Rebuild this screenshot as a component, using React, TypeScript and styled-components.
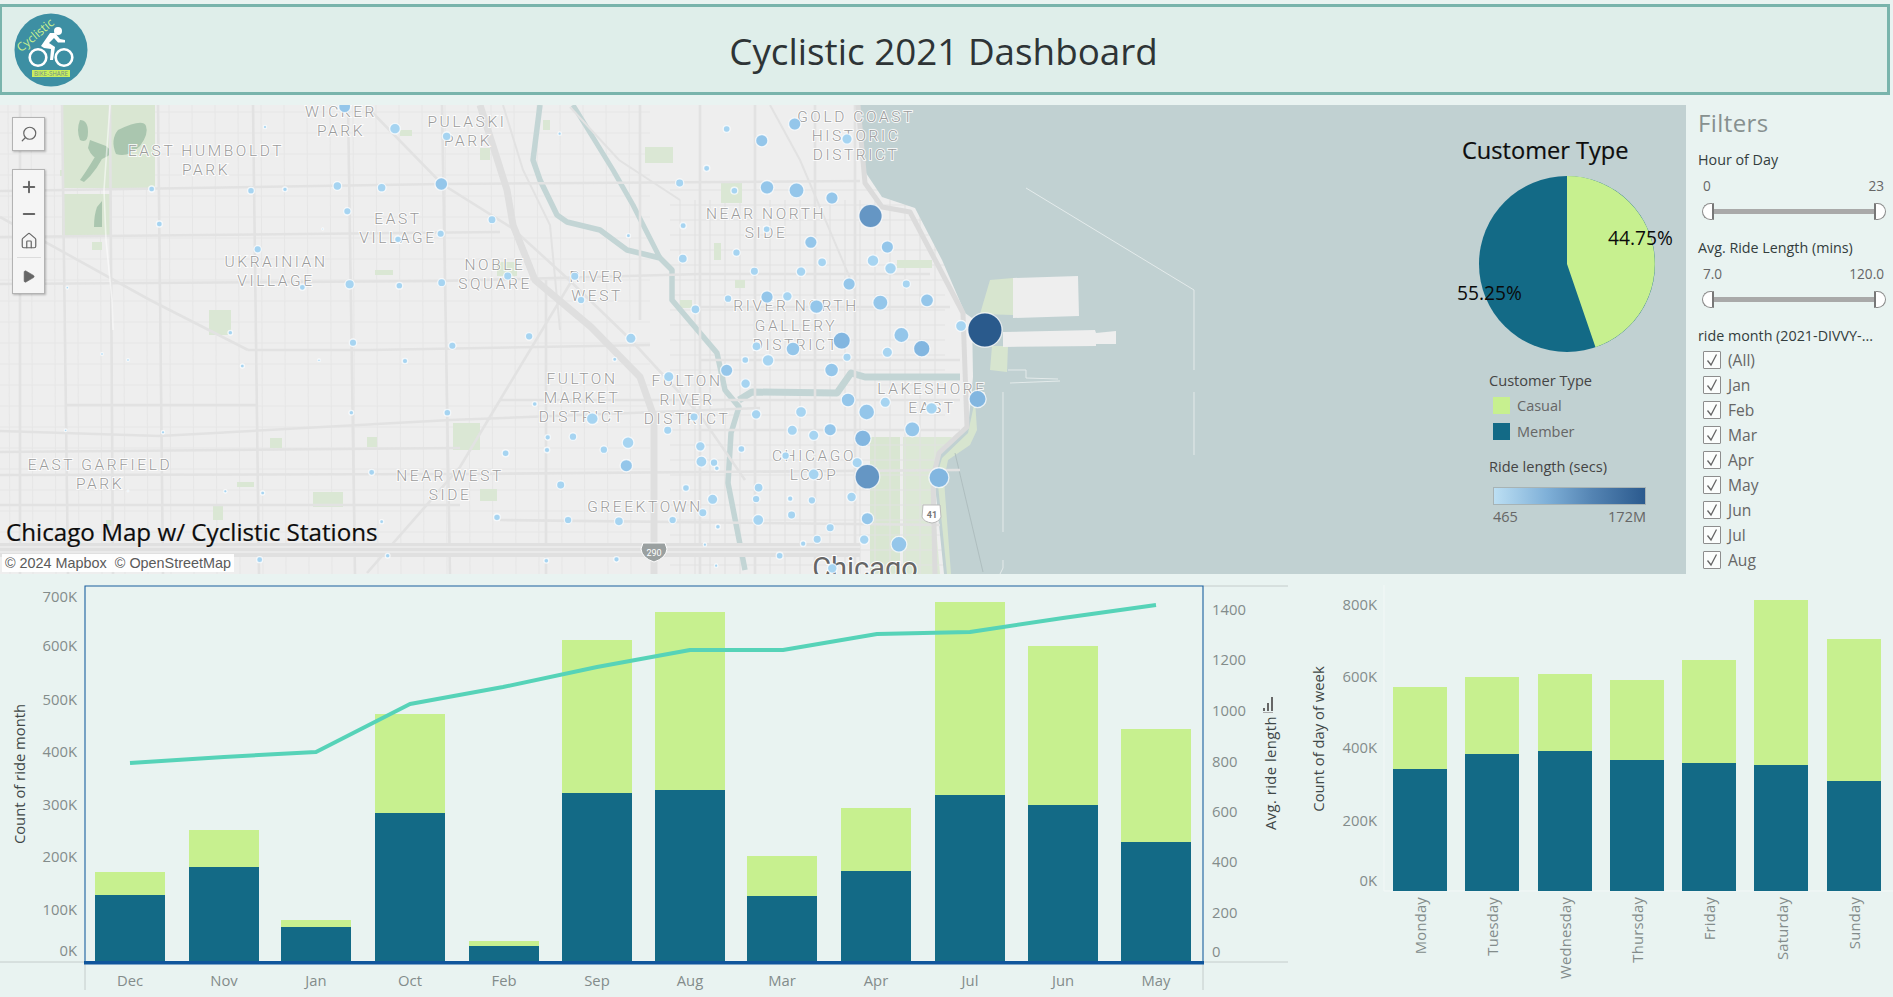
import React from "react";
import styled, { createGlobalStyle } from "styled-components";
import { Search, Plus, Minus, House, Play } from "lucide-react";

const FONT = `"Open Sans", "Noto Sans", "Liberation Sans", sans-serif`;

const Global = createGlobalStyle`
  html, body { margin: 0; padding: 0; background: #e9f3f1; }
  body { font-family: ${FONT}; overflow: hidden; }
`;

const Page = styled.div`
  width: 1893px;
  height: 997px;
  display: flex;
  flex-direction: column;
  background: #e9f3f1;
  overflow: hidden;
`;

const Header = styled.header`
  margin: 4px 3px 0 0;
  height: 91px;
  box-sizing: border-box;
  border: 3px solid #79b4ac;
  border-left-width: 2px;
  background: #dfeeea;
  display: grid;
  grid-template-columns: 1fr auto 1fr;
  align-items: center;
  padding: 0 14px 0 12px;
`;

const Title = styled.h1`
  margin: 2px 0 0;
  font-size: 36.8px;
  font-weight: 500;
  color: #2e3436;
`;

const Mid = styled.section`
  margin-top: 10px;
  height: 469px;
  display: flex;
`;

const MapPanel = styled.div`
  position: relative;
  width: 1686px;
  height: 469px;
  overflow: hidden;
  background: #eeeeee;
`;

const MapSvg = styled.svg`
  display: block;
  width: 1686px;
  height: 469px;
`;

const MapLabel = styled.text`
  font-family: Roboto, ${FONT};
  font-weight: 300;
  font-size: 15.5px;
  letter-spacing: 2.6px;
  fill: #9b9b9b;
  text-anchor: middle;
  stroke: rgba(255, 255, 255, 0.85);
  stroke-width: 2px;
  paint-order: stroke;
`;

const CityLabel = styled.text`
  font-family: Roboto, ${FONT};
  font-size: 29px;
  fill: #666;
  text-anchor: middle;
  stroke: #fff;
  stroke-width: 2px;
  paint-order: stroke;
`;

const MapCaption = styled.div`
  position: absolute;
  left: 6px;
  top: 413px;
  font-size: 24.2px;
  line-height: 28px;
  color: #0c0c0c;
  white-space: nowrap;
  -webkit-text-stroke: 0.2px #0c0c0c;
`;

const Attribution = styled.div`
  position: absolute;
  left: 2px;
  top: 449px;
  height: 18px;
  padding: 0 3px;
  background: rgba(255, 255, 255, 0.92);
  font-family: "Liberation Sans", Arial, sans-serif;
  font-size: 14.4px;
  line-height: 18px;
  color: #5a5a5a;
  white-space: pre;
`;

const ToolBox = styled.div`
  position: absolute;
  left: 12px;
  width: 31px;
  box-sizing: content-box;
  background: #f5f5f5;
  border: 1px solid #b3b3b3;
  box-shadow: 1px 1px 2px rgba(0, 0, 0, 0.25);
  display: flex;
  flex-direction: column;
  align-items: center;
  color: #666;
`;

const SearchBox = styled(ToolBox)`
  top: 12px;
  height: 32px;
  justify-content: center;
`;

const ZoomBox = styled(ToolBox)`
  top: 64px;
  height: 120px;
  padding-top: 3px;
`;

const ToolButton = styled.div`
  height: 27px;
  display: flex;
  align-items: center;
  justify-content: center;
`;

const ToolRule = styled.div`
  width: 24px;
  height: 1px;
  background: #dcdcdc;
  margin: 3px 0 5px;
`;

const PieColumn = styled.div`
  position: absolute;
  left: 1440px;
  top: 0;
  width: 246px;
  display: flex;
  flex-direction: column;
`;

const PieTitle = styled.div`
  margin: 30px 0 0 22px;
  font-size: 23.6px;
  line-height: 30px;
  color: #0d0d0d;
  -webkit-text-stroke: 0.2px #0d0d0d;
`;

const PieWrap = styled.div`
  position: relative;
  margin: 11px 0 0 39px;
  width: 176px;
  height: 176px;
`;

const PieLabel = styled.div<{ $x: number; $y: number }>`
  position: absolute;
  left: ${(p) => p.$x}px;
  top: ${(p) => p.$y}px;
  font-size: 19.2px;
  line-height: 24px;
  color: #0a0a0a;
`;

const LegendTitle = styled.div<{ $mt: number }>`
  margin: ${(p) => p.$mt}px 0 0 49px;
  font-size: 14.6px;
  line-height: 20px;
  color: #444;
`;

const LegendRows = styled.div`
  margin-top: 3px;
`;

const LegendRow = styled.div`
  margin-left: 53px;
  height: 25.5px;
  display: flex;
  align-items: center;
  gap: 7px;
  font-size: 14.5px;
  color: #666;
`;

const Swatch = styled.span<{ $c: string }>`
  width: 17px;
  height: 17px;
  background: ${(p) => p.$c};
`;

const Ramp = styled.div`
  margin: 11px 0 0 53px;
  width: 153px;
  height: 18px;
  box-sizing: border-box;
  border: 1px solid #a7b3b5;
  background: linear-gradient(90deg, #bcdff3 0%, #7fb0d8 35%, #5484b3 65%, #2b5a8e 100%);
`;

const RampLabels = styled.div`
  margin: 3px 0 0 53px;
  width: 153px;
  display: flex;
  justify-content: space-between;
  font-size: 14.5px;
  line-height: 18px;
  color: #666;
`;

const Filters = styled.aside`
  flex: 1;
  box-sizing: border-box;
  padding: 0 6px 0 12px;
  display: flex;
  flex-direction: column;
`;

const FiltersTitle = styled.div`
  font-size: 24px;
  line-height: 32px;
  margin: 2px 0 11px;
  color: #87908f;
  letter-spacing: 0.4px;
`;

const FilterName = styled.div`
  font-size: 14.3px;
  line-height: 20px;
  color: #333d3d;
  white-space: nowrap;
`;

const RangeValues = styled.div`
  display: flex;
  justify-content: space-between;
  padding: 0 3px 0 5px;
  margin-top: 6px;
  font-size: 13.6px;
  line-height: 20px;
  color: #666;
`;

const SliderRow = styled.div`
  display: flex;
  align-items: center;
  padding-left: 4px;
  height: 18px;
  margin: 6px 0 18px;
`;

const Handle = styled.span<{ $right?: boolean }>`
  width: 12px;
  height: 17px;
  box-sizing: border-box;
  background: #fff;
  border: 1px solid #8a8a8a;
  border-radius: ${(p) => (p.$right ? "0 9px 9px 0" : "9px 0 0 9px")};
  ${(p) => (p.$right ? "border-left: 2px solid #777;" : "border-right: 2px solid #777;")}
`;

const Track = styled.span`
  width: 160px;
  height: 5px;
  background: #a9a9a9;
`;

const CheckList = styled.div`
  margin-top: 1px;
`;

const CheckRow = styled.div`
  height: 25px;
  display: flex;
  align-items: center;
  padding-left: 5px;
  gap: 7px;
  font-size: 15.6px;
  color: #666;
`;

const CheckBox = styled.span`
  width: 18px;
  height: 18px;
  box-sizing: border-box;
  border: 1px solid #8d8d8d;
  border-radius: 1px;
  background: #fbfdfc;
  display: flex;
  align-items: center;
  justify-content: center;
`;

const Bottom = styled.section`
  margin-top: 11px;
  flex: 1;
  display: flex;
`;

const ChartSvg = styled.svg`
  display: block;
  height: 412px;
`;

const AxisText = styled.text<{ $anchor?: string }>`
  font-family: ${FONT};
  font-size: 14.8px;
  fill: #838c8b;
  text-anchor: ${(p) => p.$anchor || "end"};
  dominant-baseline: central;
`;

const AxisTitle = styled.text<{ $spread?: number }>`
  font-family: ${FONT};
  font-size: 14.8px;
  letter-spacing: ${(p) => p.$spread || 0}px;
  fill: #3f4747;
  text-anchor: middle;
  dominant-baseline: central;
`;

const DayLabel = styled(AxisText)`
  letter-spacing: 0.2px;
`;

/* ---------- map data ---------- */
const z5: number[][] = [
  [840,72,36],[746,122,36],[646,87,20],[989,117,30],[170,101,10],[589,205,18],[512,249,24],[668,272,20],[761,262,40],[845,271,44],[946,294,36],[1056,348,68],[522,377,18],[760,388,20],[366,407,12],[886,427,36],[1104,441,36],[674,458,22],[521,476,26],[1063,482,34],[918,487,26],[1113,505,34],[725,514,24],[858,515,28],[213,529,24],[22,528,24],[995,552,36],[1158,552,24],[231,600,22],[650,596,22],[761,591,36],[819,589,28],[557,628,26],[902,620,40],[1084,608,44],[1217,601,38],[1314,678,32],[1382,690,100],[1144,705,44],[83,709,22],[373,715,30],[974,722,50],[731,739,26],[835,747,40],[1202,746,48],[1104,757,30],[989,772,24],[327,778,12],[699,780,20],[764,781,34],[945,810,40],[646,811,36],[481,830,30],[700,851,28],[99,912,14],[992,900,40],[1098,907,30],[1045,936,46],[1361,897,50],[1230,925,34],[730,943,28],[858,936,32],[263,956,34],[553,951,24],[478,991,24],[833,991,30],[894,1006,30],[941,989,36],[1175,988,44],[136,1012,16],[208,1010,22],[365,1028,34],[1034,1015,48],[296,1049,22],[134,1050,16],[16,1060,20],[571,1039,28],[688,1047,20],[814,1067,22],[574,1085,32],[610,1088,22],[618,1105,14],[360,1097,36],[1018,1088,30],[894,1123,32],[1047,1130,72],[1251,1133,58],[173,1155,24],[530,1164,20],[737,1163,26],[606,1198,30],[730,1197,22],[827,1196,16],[889,1201,22],[1002,1191,28],[578,1238,24],[194,1260,22],[339,1264,26],[492,1260,22],[736,1260,32],[831,1245,24],[1047,1256,36],[621,1280,14],[941,1283,24],[904,1318,24],[1038,1319,28],[864,1331,16],[584,1334,10],[1137,1333,46],[797,1367,20],[132,1382,14],[332,1378,16],[616,1397,10],[947,1405,28],
];
const z1: number[][] = [
  [795,381,10],[1034,320,36],[1185,386,32],[1340,409,26],[455,567,18],[753,572,20],[855,568,14],[1012,558,26],[1145,563,26],[1324,552,38],[1042,634,22],[478,672,18],[1476,659,24],[1322,701,22],[1194,718,20],[968,687,6],[773,748,22],[1049,853,28],[1198,857,20],[1325,848,24],[907,862,18],[202,863,8],
];
const z6: number[][] = [
  [691,98,14],[1059,128,22],[1357,137,22],[306,162,8],[384,180,8],[727,198,12],[957,181,8],[1215,183,16],[1054,338,14],[1342,338,20],[197,391,8],[489,397,10],[1115,517,18],[676,574,10],[788,579,12],[384,573,5],[1145,665,12],[1491,652,20],[1163,767,14],[779,779,18],
];
const stations = [
  ...z1.map(([x, y, d]) => [x / 3, y / 3, d / 3]),
  ...z6.map(([x, y, d]) => [x / 3, 300 + y / 3, d / 3]),
  ...z5.map(([x, y, d]) => [500 + x / 2.85, 100 + y / 3, d / 2.92]),
];
const stationColor = (d: number) =>
  d >= 30 ? "#2a5a8c" : d >= 22 ? "#6596c4" : d >= 16 ? "#82b6e0" : d >= 12 ? "#94c6ea" : "#a6d4f1";

const labels: [string, number, number][] = [
  ["EAST HUMBOLDT",206,151],["PARK",206,170],["WICKER",341,112],["PARK",341,131],["PULASKI",467,122],["PARK",468,141],
  ["EAST",398,219],["VILLAGE",398,238],["UKRAINIAN",276,262],["VILLAGE",276,281],["NOBLE",495,265],["SQUARE",495,284],
  ["RIVER",597,277],["WEST",597,296],["GOLD COAST",856,117],["HISTORIC",856,136],["DISTRICT",856,155],["NEAR NORTH",766,214],["SIDE",766,233],
  ["RIVER NORTH",796,306],["GALLERY",796,326],["DISTRICT",796,345],["FULTON",582,379],["MARKET",582,398],["DISTRICT",582,417],
  ["FULTON",687,381],["RIVER",687,400],["DISTRICT",687,419],["LAKESHORE",932,389],["EAST",932,408],["CHICAGO",814,456],["LOOP",814,475],
  ["GREEKTOWN",645,507],["EAST GARFIELD",100,465],["PARK",100,484],["NEAR WEST",450,476],["SIDE",450,495],
];

const range = (a: number, b: number, s: number) => {
  const o: number[] = [];
  for (let v = a; v <= b; v += s) o.push(v);
  return o;
};
const minorV = range(8, 640, 23);
const minorH = range(112, 570, 21);
const downV = range(680, 940, 15);
const downH = range(190, 570, 15);
const majorV: [number, number, number, number][] = [
  [20,105,20,574],[62,105,68,574],[110,105,113,574],[158,105,163,574],[253,105,259,574],[348,105,355,574],[442,105,450,574],[546,280,546,574],[640,105,640,320],[700,105,700,574],[755,105,755,574],[815,105,815,574],[855,105,855,574],
];
const majorH: [number, number, number, number][] = [
  [0,191,442,184],[442,184,860,181],[0,237,500,232],[0,284,442,281],[442,281,700,274],[700,274,930,274],[0,431,160,436],[160,436,450,420],[450,420,760,408],
  [0,452,460,448],[0,475,460,474],[460,474,960,470],[0,505,460,505],[370,350,650,345],[248,350,370,350],[65,405,257,405],[700,307,950,307],[700,360,960,360],[700,430,960,430],[500,400,960,400],[500,520,940,525],
];
const parks: [number, number, number, number][] = [
  [209,310,22,25],[270,438,12,10],[367,437,10,10],[453,423,27,27],[313,492,30,15],[213,505,10,15],[480,489,17,12],[237,482,17,5],[375,270,18,5],[480,148,10,12],[645,147,28,16],[543,120,7,10],[497,262,20,14],[721,183,21,20],[714,243,7,17],[680,300,12,8],[897,260,35,8],[92,242,10,8],[106,520,6,6],[80,550,25,6],[60,170,6,6],[735,280,10,8],[400,130,12,6],
];

/* ---------- charts ---------- */
const months: [string, number, number, number][] = [
  ["Dec",95,872,895],["Nov",189,830,867],["Jan",281,920,927],["Oct",375,714,813],["Feb",469,941,946],["Sep",562,640,793],
  ["Aug",655,612,790],["Mar",747,856,896],["Apr",841,808,871],["Jul",935,602,795],["Jun",1028,646,805],["May",1121,729,842],
];
const linePts = "130,763 224,757 316,752 410,704 503,687 597,667 690,650 783,650 877,634 970,632 1063,618 1156,605";
const leftTicks: [string, number][] = [["700K",596],["600K",645],["500K",699],["400K",751],["300K",804],["200K",856],["100K",909],["0K",950]];
const rightTicks: [string, number][] = [["1400",609],["1200",659],["1000",710],["800",761],["600",811],["400",861],["200",912],["0",951]];
const days: [string, number, number, number, number][] = [
  ["Monday",1393,687,769,1420],["Tuesday",1465,677,754,1492],["Wednesday",1538,674,751,1565],["Thursday",1610,680,760,1637],
  ["Friday",1682,660,763,1709],["Saturday",1754,600,765,1782],["Sunday",1827,639,781,1854],
];
const dayTicks: [string, number][] = [["800K",604],["600K",676],["400K",747],["200K",820],["0K",880]];
const GREEN = "#c7f08f";
const TEAL = "#136a86";
const months2 = ["(All)", "Jan", "Feb", "Mar", "Apr", "May", "Jun", "Jul", "Aug"];

const Logo = () => (
  <svg width="74" height="74" viewBox="14 8 74 74">
    <circle cx="51" cy="45" r="36.5" fill="#3d8fa3" />
    <circle cx="38" cy="52.5" r="8.3" fill="none" stroke="#fff" strokeWidth="2.6" />
    <circle cx="64" cy="52.5" r="8.3" fill="none" stroke="#fff" strokeWidth="2.6" />
    <circle cx="58" cy="26" r="4" fill="#fff" />
    <path d="M41 41 L50 28 L55 28 L60 34 L65 35 L65 37.5 L58 37.5 L54 33 L49 38 L55 42 L53 55 L50 55 L51 44 L44 43 Z" fill="#fff" />
    <g transform="rotate(-40 36 31)">
      <text x="36" y="34" textAnchor="middle" fontFamily="Open Sans" fontSize="12" fill="#c8f08f">Cyclistic</text>
    </g>
    <rect x="32" y="65" width="38" height="7" fill="#c9ee5e" />
    <text x="51" y="71" textAnchor="middle" fontFamily="Open Sans" fontSize="6.2" fill="#6f8f8a">BIKE-SHARE</text>
  </svg>
);

const MapDrawing = () => (
  <MapSvg viewBox="0 105 1686 469">
    <rect x="0" y="105" width="1686" height="469" fill="#eeeeee" />
    <path d="M870 437 H900 V574 H870 Z" fill="#d9e6d2" />
    <path d="M903 437 H952 L938 457 L932 480 L940 574 H903 Z" fill="#dce8d6" />
    <g stroke="#e6e6e6" strokeWidth="1">
      {minorV.map((x) => <line key={x} x1={x} y1="105" x2={x + 2} y2="574" />)}
      {minorH.map((y) => <line key={y} x1="0" y1={y} x2="650" y2={y} />)}
    </g>
    <g stroke="#e2e2e2" strokeWidth="1.1">
      {downV.map((x) => <line key={x} x1={x} y1="200" x2={x} y2="574" />)}
      {downH.map((y) => <line key={y} x1="670" y1={y} x2="945" y2={y} />)}
    </g>
    {parks.map(([x, y, w, h]) => <rect key={`${x}-${y}`} x={x} y={y} width={w} height={h} fill="#dae7d4" />)}
    <path d="M62 105H155V188H62Z M62 194H110V237H62Z" fill="#d9e6d2" />
    <path d="M80 120q8 0 8 12t-8 8q-4-10 0-20Z M118 130q25-12 28-4t-6 20q-12 12-24 8q-6-14 2-24Z M90 140l16 6q8 6 2 10l-8 4q-8-2-12-12Z M106 150q-8 20-22 32l-4-2q10-14 20-32Z M97 207q-3 8-3 20h8v-26Z" fill="#aac6af" />
    {/* water */}
    <path d="M858 105 L862 167 L882 197 L915 208 L942 260 L965 313 L972 318 L973 377 L968 428 L940 453 L934 475 L944 574 H1686 V105 Z" fill="#c1d1d2" />
    <path d="M980 314 L990 280 L1013 278 V315 Z M992 346 H1008 L1007 372 L990 370 Z M947 574 L937 475 L942 458 L968 433 L975 400 L977 430 L970 445 L948 460 L944 480 L951 574 Z" fill="#d7e5cf" />
    <path d="M1013 278 L1078 276 L1079 316 L1013 318 Z M1003 332 L1095 330 L1096 333 L1116 331 V344 L1096 344 V346 L1003 347 Z" fill="#eeeeee" />
    <g stroke="#e8eeee" strokeWidth="1" fill="none" opacity="0.9">
      <polyline points="1026,188 1194,290 1194,370" />
      <line x1="1194" y1="392" x2="1194" y2="455" />
      <line x1="1003" y1="392" x2="1003" y2="532" />
      <polyline points="1003,560 1003,568 1000,574" />
      <polyline points="1008,370 1026,370 1026,378 1058,379" />
      <line x1="1010" y1="383" x2="1060" y2="381" />
    </g>
    <line x1="955" y1="453" x2="983" y2="572" stroke="#a9b9ba" strokeWidth="0.8" />
    {/* river */}
    <g fill="none" stroke="#c3d5d5" strokeWidth="5.5" strokeLinejoin="round">
      <polyline points="540,105 533,160 540,180 557,215 567,222 600,230 627,250 660,258 672,270 672,300 717,353 725,390 739,407 731,433 728,483 745,570" />
      <polyline points="573,105 613,170 633,205 660,258" strokeWidth="5" />
      <polyline points="739,400 752,392 837,393 851,373 865,377 960,377" strokeWidth="7" />
    </g>
    {/* roads */}
    <g fill="none" stroke="#e2e2e2" strokeWidth="2.6">
      {majorV.map(([a, b, c, d], i) => <line key={i} x1={a} y1={b} x2={c} y2={d} />)}
      {majorH.map(([a, b, c, d], i) => <line key={i} x1={a} y1={b} x2={c} y2={d} />)}
      <polyline points="367,107 442,184 512,228 567,278 631,340 700,415 745,480" />
      <polyline points="0,217 150,300 248,350" />
      <polyline points="500,400 460,467 367,573" />
      <polyline points="574,277 500,400" />
      <polyline points="503,105 523,170 550,225 560,330" strokeWidth="2" />
      <polyline points="570,107 619,160 680,200" strokeWidth="2" />
      <polyline points="770,105 800,160 855,290" strokeWidth="2" />
    </g>
    <polyline points="110,105 104,190 106,240 112,300 113,330" fill="none" stroke="#fff" strokeWidth="1.6" opacity="0.55" />
    <polyline points="480,105 507,190 513,225 535,280 591,327 640,377 654,417 654,574" fill="none" stroke="#dfdfdf" strokeWidth="7" strokeLinejoin="round" />
    <polyline points="858,105 865,183 882,207 910,212 963,313 967,427 939,453 933,477 935,574" fill="none" stroke="#dbdbdb" strokeWidth="5" strokeLinejoin="round" />
    <rect x="0" y="543" width="860" height="14" fill="#e0e0e0" />
    <g stroke="#f4f4f4" strokeWidth="1"><line x1="0" y1="547" x2="860" y2="547" /><line x1="0" y1="552" x2="860" y2="552" /></g>
    {/* highway shields */}
    <path d="M643 543h22l2 6q-1 9-13 13q-12-4-13-13Z" fill="#9aa0a0" stroke="#fff" />
    <text x="654" y="556" textAnchor="middle" fontFamily="Roboto" fontSize="9" fill="#fff">290</text>
    <path d="M923 505h17l1 12q-2 5-9 6q-8-1-10-6Z" fill="#fff" stroke="#bbb" />
    <text x="932" y="518" textAnchor="middle" fontFamily="Roboto" fontWeight="700" fontSize="9" fill="#777">41</text>
    {labels.map(([t, x, y], i) => <MapLabel key={i} x={x} y={y + 5}>{t}</MapLabel>)}
    <CityLabel x="865" y="578">Chicago</CityLabel>
    {stations.map(([x, y, d], i) => (
      <circle key={i} cx={x} cy={y} r={d / 2} fill={stationColor(d)} stroke="rgba(255,255,255,0.75)" strokeWidth="1.3" />
    ))}
  </MapSvg>
);

const Pie = () => (
  <svg width="176" height="176" viewBox="-88 -88 176 176">
    <circle r="88" fill={TEAL} />
    <path d="M0 0 L0 -88 A88 88 0 0 1 28.5 83.2 Z" fill={GREEN} />
  </svg>
);

const Range = ({ name, lo, hi }: { name: string; lo: string; hi: string }) => (
  <>
    <FilterName>{name}</FilterName>
    <RangeValues><span>{lo}</span><span>{hi}</span></RangeValues>
    <SliderRow><Handle /><Track /><Handle $right /></SliderRow>
  </>
);

export default function App() {
  return (
    <Page>
      <Global />
      <Header>
        <Logo />
        <Title>Cyclistic 2021 Dashboard</Title>
      </Header>
      <Mid>
        <MapPanel>
          <MapDrawing />
          <SearchBox><Search size={18} strokeWidth={1.6} style={{ transform: "scaleX(-1)" }} /></SearchBox>
          <ZoomBox>
            <ToolButton><Plus size={18} strokeWidth={2.6} /></ToolButton>
            <ToolButton><Minus size={18} strokeWidth={2.6} /></ToolButton>
            <ToolButton><House size={18} strokeWidth={1.6} /></ToolButton>
            <ToolRule />
            <ToolButton><Play size={15} fill="currentColor" strokeWidth={1} /></ToolButton>
          </ZoomBox>
          <MapCaption>Chicago Map w/ Cyclistic Stations</MapCaption>
          <Attribution>© 2024 Mapbox  © OpenStreetMap</Attribution>
          <PieColumn>
            <PieTitle>Customer Type</PieTitle>
            <PieWrap>
              <Pie />
              <PieLabel $x={129} $y={50}>44.75%</PieLabel>
              <PieLabel $x={-22} $y={105}>55.25%</PieLabel>
            </PieWrap>
            <LegendTitle $mt={18}>Customer Type</LegendTitle>
            <LegendRows>
              <LegendRow><Swatch $c={GREEN} />Casual</LegendRow>
              <LegendRow><Swatch $c={TEAL} />Member</LegendRow>
            </LegendRows>
            <LegendTitle $mt={12}>Ride length (secs)</LegendTitle>
            <Ramp />
            <RampLabels><span>465</span><span>172M</span></RampLabels>
          </PieColumn>
        </MapPanel>
        <Filters>
          <FiltersTitle>Filters</FiltersTitle>
          <Range name="Hour of Day" lo="0" hi="23" />
          <Range name="Avg. Ride Length (mins)" lo="7.0" hi="120.0" />
          <FilterName>ride month (2021-DIVVY-...</FilterName>
          <CheckList>
            {months2.map((m) => (
              <CheckRow key={m}>
                <CheckBox>
                  <svg width="14" height="14" viewBox="0 0 14 14">
                    <path d="M2.5 7.5 L6 12 L11.5 1.5" fill="none" stroke="#666" strokeWidth="1.3" />
                  </svg>
                </CheckBox>
                {m}
              </CheckRow>
            ))}
          </CheckList>
        </Filters>
      </Mid>
      <Bottom>
        <ChartSvg width="1300" viewBox="0 585 1300 412">
          <line x1="0" y1="962" x2="85" y2="962" stroke="#c4cccb" />
          <line x1="1203" y1="962" x2="1288" y2="962" stroke="#c4cccb" />
          <line x1="1203" y1="586" x2="1288" y2="586" stroke="#c4cccb" />
          <line x1="85" y1="964" x2="85" y2="990" stroke="#c4cccb" />
          <line x1="1203" y1="964" x2="1203" y2="990" stroke="#c4cccb" />
          {months.map(([m, x, top, div]) => (
            <g key={m}>
              <rect x={x} y={top} width="70" height={div - top} fill={GREEN} />
              <rect x={x} y={div} width="70" height={962 - div} fill={TEAL} />
              <AxisText $anchor="middle" x={x + 35} y={980}>{m}</AxisText>
            </g>
          ))}
          <polyline points={linePts} fill="none" stroke="#56d3b8" strokeWidth="4" strokeLinejoin="round" />
          <path d="M85 962V586H1203V962" fill="none" stroke="#1a5f9e" strokeWidth="1.1" />
          <rect x="84" y="961" width="1120" height="3.5" fill="#0f559c" />
          {leftTicks.map(([t, y]) => <AxisText key={t} x="77" y={y}>{t}</AxisText>)}
          {rightTicks.map(([t, y]) => <AxisText $anchor="start" key={t} x="1212" y={y}>{t}</AxisText>)}
          <AxisTitle transform="rotate(-90 19 774)" x="19" y="774">Count of ride month</AxisTitle>
          <AxisTitle $spread={0.45} transform="rotate(-90 1270 773)" x="1270" y="773">Avg. ride length</AxisTitle>
          <g fill="#666">
            <rect x="1263" y="708" width="2" height="3" />
            <rect x="1267" y="703" width="2" height="8" />
            <rect x="1271" y="697" width="2" height="14" />
            <rect x="1263" y="712" width="10" height="1" fill="#aaa" />
          </g>
        </ChartSvg>
        <ChartSvg width="593" viewBox="1300 585 593 412">
          <line x1="1384" y1="585" x2="1384" y2="891" stroke="#f3f8f7" />
          <line x1="1384" y1="891" x2="1893" y2="891" stroke="#f3f8f7" />
          {days.map(([d, x, top, div, c]) => (
            <g key={d}>
              <rect x={x} y={top} width="54" height={div - top} fill={GREEN} />
              <rect x={x} y={div} width="54" height={891 - div} fill={TEAL} />
              <DayLabel $anchor="end" transform={`rotate(-90 ${c} 897)`} x={c} y={897}>{d}</DayLabel>
            </g>
          ))}
          {dayTicks.map(([t, y]) => <AxisText key={t} x="1377" y={y}>{t}</AxisText>)}
          <AxisTitle transform="rotate(-90 1318 739)" x="1318" y="739">Count of day of week</AxisTitle>
        </ChartSvg>
      </Bottom>
    </Page>
  );
}
